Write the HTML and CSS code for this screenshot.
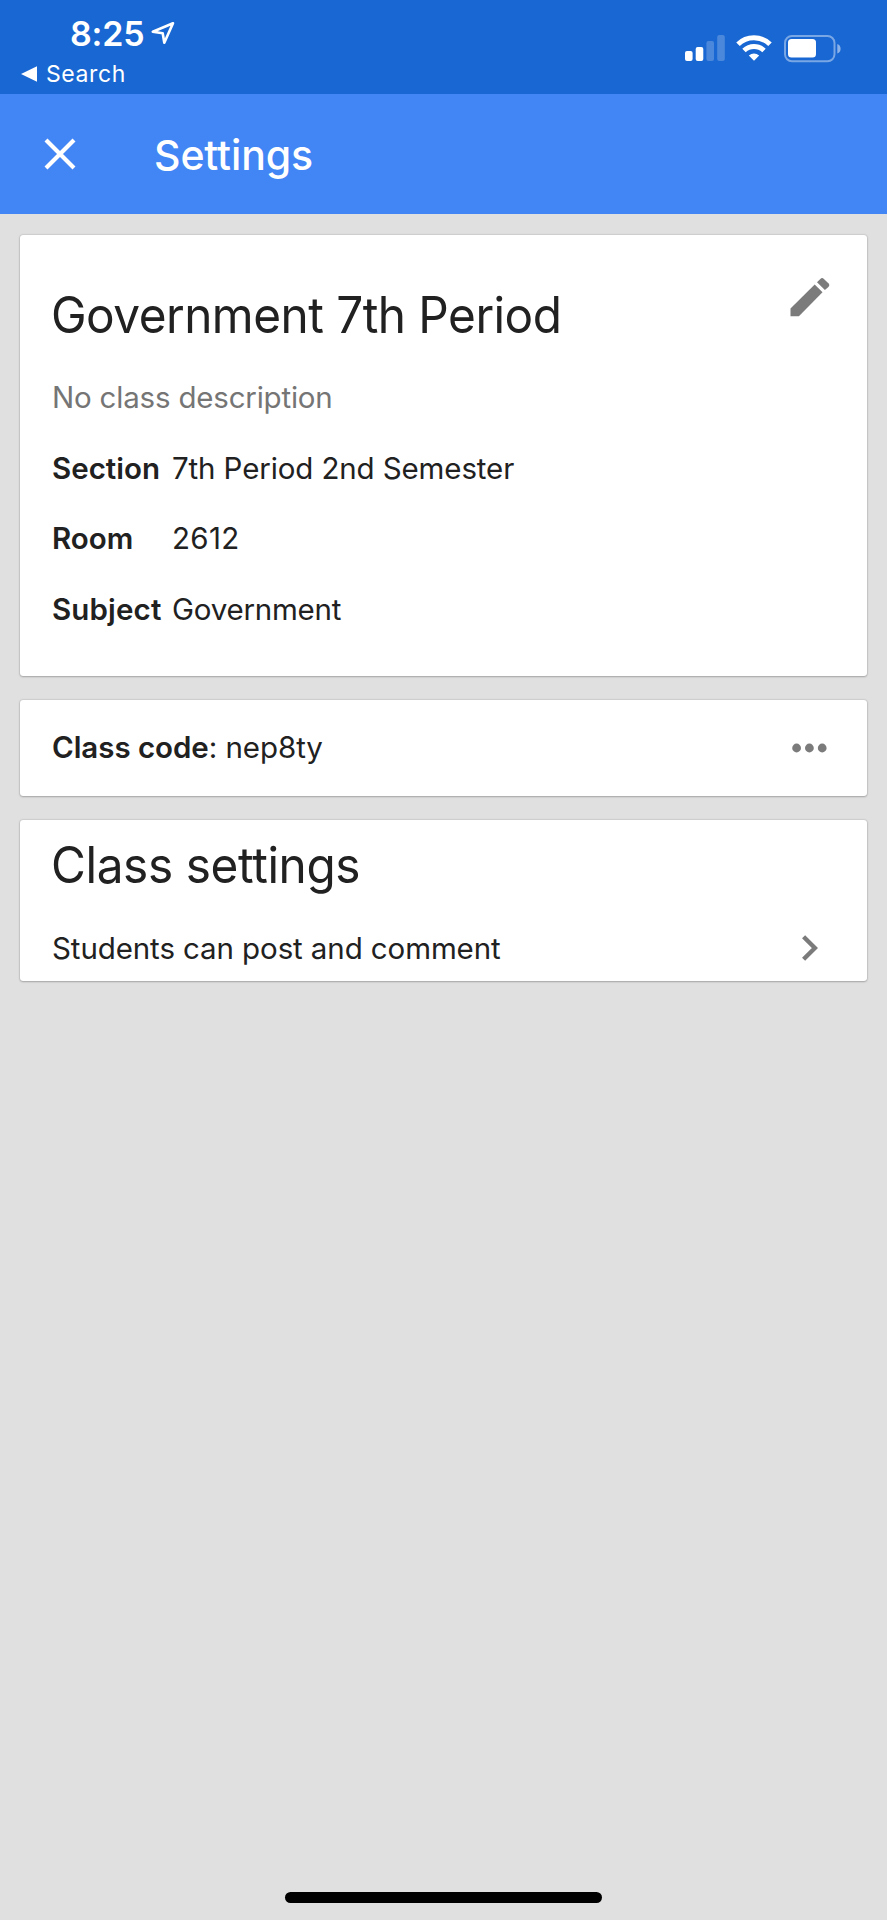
FILE: index.html
```html
<!DOCTYPE html>
<html lang="en">
<head>
<meta charset="utf-8">
<title>Settings</title>
<link rel="stylesheet" href="styles.css">
</head>
<body>
<div class="screen">
  <div class="status-bar">
    <div class="status-left">
      <div class="clock">
        <span class="time">8:25</span>
        <svg class="location" width="24" height="24" viewBox="0 0 24 24"><path d="M22 2.200 1.800 10.700 11.700 12.200 13.300 21.700Z" fill="none" stroke="#fff" stroke-width="2.600" stroke-linejoin="round"/></svg>
      </div>
      <div class="back">
        <svg width="16" height="16" viewBox="0 0 16 16"><path d="M0 8 16 .3v15.4Z" fill="#fff"/></svg>
        <span class="back-label">Search</span>
      </div>
    </div>
    <div class="status-right">
      <svg width="40" height="26" viewBox="0 0 40 26" fill="#fff"><rect x="0" y="16" width="7.6" height="10" rx="2"/><rect x="10.7" y="12" width="7.6" height="14" rx="2"/><rect x="21.4" y="6" width="7.6" height="20" rx="2" opacity=".22"/><rect x="32.2" y="0" width="7.6" height="26" rx="2" opacity=".22"/></svg>
      <svg class="wifi" width="36" height="26" viewBox="0 0 36 26"><g fill="none" stroke="#fff" stroke-width="5"><path d="M2 9.3Q8.500 2.800 18 2.800T34 9.300"/><path d="M8 15.500Q12.300 11.500 18 11.500T28 15.500"/></g><path d="M12.800 20.600Q18 16.400 23.200 20.600L18 25.800Z" fill="#fff"/></svg>
      <svg class="battery" width="57" height="28" viewBox="0 0 57 28"><rect x="1" y="1" width="49.500" height="25.300" rx="7" fill="none" stroke="#fff" stroke-opacity=".42" stroke-width="2"/><rect x="4" y="4" width="28" height="18.500" rx="3.500" fill="#fff"/><path d="M53.300 9Q56.600 10.200 56.600 13.800T53.300 18.600Z" fill="#fff" opacity=".5"/></svg>
    </div>
  </div>

  <header class="app-bar">
    <svg class="close" width="32" height="32" viewBox="0 0 32 32"><path d="M2 2 30 30M30 2 2 30" stroke="#fff" stroke-width="4.200"/></svg>
    <h1 class="app-title">Settings</h1>
  </header>

  <main class="content">
    <section class="card info">
      <div class="info-head">
        <h2 class="heading class-name">Government 7th Period</h2>
        <svg class="edit" width="40" height="40" viewBox="0 0 40 40" fill="#7b7b7b"><path d="M.500 31.600 24.700 7.500 32.500 15.300 8.900 39.300H.500Z"/><path d="M27 5.200 30.300 1.900Q32.100.200 33.900 1.900L38.400 6.300Q40.200 8.100 38.400 9.900L34.900 13.100Z"/></svg>
      </div>
      <p class="row muted"><span class="description">No class description</span></p>
      <div class="row"><b class="key section-key">Section</b><span class="section-value">7th Period 2nd Semester</span></div>
      <div class="row"><b class="key room-key">Room</b><span class="room-value">2612</span></div>
      <div class="row"><b class="key subject-key">Subject</b><span class="subject-value">Government</span></div>
    </section>

    <section class="card code">
      <p class="code-text"><b>Class code</b>: nep8ty</p>
      <svg width="35" height="10" viewBox="0 0 35 10" fill="#7b7b7b"><circle cx="4.600" cy="5" r="4.400"/><circle cx="17.400" cy="5" r="4.400"/><circle cx="30.200" cy="5" r="4.400"/></svg>
    </section>

    <section class="card settings">
      <h2 class="heading settings-title">Class settings</h2>
      <div class="option">
        <span class="option-label">Students can post and comment</span>
        <svg width="16" height="26" viewBox="0 0 16 26"><path d="M1.600 1.700 12.900 13 1.600 24.300" fill="none" stroke="#7b7b7b" stroke-width="4.400"/></svg>
      </div>
    </section>
  </main>
  <div class="home-indicator"></div>
</div>
</body>
</html>
```
FILE: styles.css
```css
* { box-sizing: border-box; }
body { margin: 0; }
h1, h2, p { margin: 0; font-weight: 400; }
b { font-weight: 600; }
svg { display: block; flex: none; }

.screen {
  display: flex;
  flex-direction: column;
  width: 887px;
  height: 1920px;
  background: #e0e0e0;
  color: #212121;
  font-family: Inter, "Liberation Sans", sans-serif;
  font-size: 29.5px;
  white-space: nowrap;
}

.status-bar {
  display: flex;
  justify-content: space-between;
  height: 94px;
  background: #1967d2;
  color: #fff;
}
.status-left { padding: 13px 0 0 21px; }
.clock { display: flex; align-items: center; height: 40px; padding-left: 49px; }
.time { width: 81px; font-size: 34px; font-weight: 600; letter-spacing: -.2px; }
.back { display: flex; align-items: center; gap: 9px; height: 41px; font-size: 23px; }
.back-label { letter-spacing: .6px; }
.status-right { display: flex; padding: 35px 46px 0 0; }
.wifi { margin-left: 11px; }
.battery { margin-left: 12px; }

.app-bar {
  display: flex;
  align-items: center;
  height: 120px;
  padding-left: 44px;
  background: #4285f4;
  color: #fff;
}
.app-title { margin-left: 78px; padding-top: 1px; font-size: 41px; font-weight: 500; letter-spacing: -.1px; }

.content {
  display: flex;
  flex: 1;
  flex-direction: column;
  gap: 24px;
  padding: 21px 20px 0;
}
.card {
  background: #fff;
  border-radius: 3px;
  box-shadow: 0 0 2px rgba(0, 0, 0, .28), 0 1px 2px rgba(0, 0, 0, .2);
}
.heading {
  margin-left: -1px;
  font-size: 50px;
  line-height: 60px;
  letter-spacing: -.55px;
  transform: scaleX(.955);
  transform-origin: left;
}

.info { height: 441px; padding: 42px 37px 0 32px; }
.info-head { display: flex; justify-content: space-between; height: 85px; }
.class-name { padding-top: 8px; }
.row { display: flex; align-items: center; height: 70.6px; }
.muted { color: #757575; }
.key { width: 120px; }
.description { letter-spacing: -.2px; }
.section-value { letter-spacing: -.12px; }
.room-value { letter-spacing: .3px; }
.subject-key { letter-spacing: .15px; }
.subject-value { letter-spacing: -.22px; }

.code { display: flex; align-items: center; justify-content: space-between; height: 96px; padding: 0 40px 0 32px; }
.code-text { padding-bottom: 2px; letter-spacing: -.05px; }

.settings { height: 161px; padding: 15px 49px 0 32px; }
.settings-title { letter-spacing: -.4px; }
.option { display: flex; align-items: center; justify-content: space-between; height: 36px; margin-top: 35px; }
.option-label { letter-spacing: -.1px; }

.home-indicator { width: 317px; height: 11px; margin: 0 auto 17px; border-radius: 6px; background: #000; }
```
